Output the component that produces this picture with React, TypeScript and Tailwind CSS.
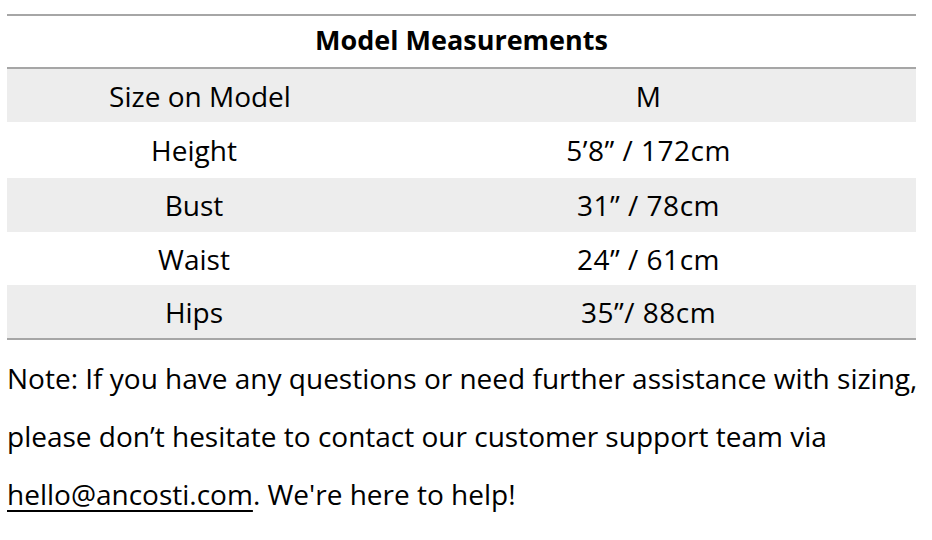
const rows = [
  { label: 'Size on Model', value: 'M', shaded: true, h: 'h-[53px]', labelPad: 'pl-3' },
  { label: 'Height', value: '5’8” / 172cm', shaded: false, h: 'h-[56px]', labelPad: '' },
  { label: 'Bust', value: '31” / 78cm', shaded: true, h: 'h-[54px]', labelPad: '' },
  { label: 'Waist', value: '24” / 61cm', shaded: false, h: 'h-[53px]', labelPad: '' },
  { label: 'Hips', value: '35”/ 88cm', shaded: true, h: 'h-[53px]', labelPad: '' },
];

export default function App() {
  return (
    <div className="w-[932px] h-[540px] bg-white text-black font-['Open_Sans',sans-serif] overflow-hidden [font-variant-ligatures:none]">
      <div className="pt-[14px] pl-[7px] w-[916px]">
        {/* Table */}
        <div className="border-t-2 border-b-2 border-[#a6a6a6]">
          <div className="h-[51px] pb-[3px] flex items-center justify-center text-[27px] font-bold">
            Model Measurements
          </div>
          <div className="border-t-2 border-[#a6a6a6]">
            {rows.map((r) => (
              <div
                key={r.label}
                className={`grid grid-cols-[374px_1fr] items-center text-[28px] ${r.h} ${
                  r.shaded ? 'bg-[#ededed]' : 'bg-white'
                }`}
              >
                <div className={`text-center ${r.labelPad}`}>{r.label}</div>
                <div className="text-center tracking-[0.5px]">{r.value}</div>
              </div>
            ))}
          </div>
        </div>

        {/* Note */}
        <p className="mt-[9px] text-[28px] leading-[58px] w-[932px] whitespace-nowrap">
          Note: If you have any questions or need further assistance with sizing,
          <br />
          please don’t hesitate to contact our customer support team via
          <br />
          <a href="mailto:hello@ancosti.com" className="underline decoration-2 underline-offset-[5px]">
            hello@ancosti.com
          </a>
          . We're here to help!
        </p>
      </div>
    </div>
  );
}
